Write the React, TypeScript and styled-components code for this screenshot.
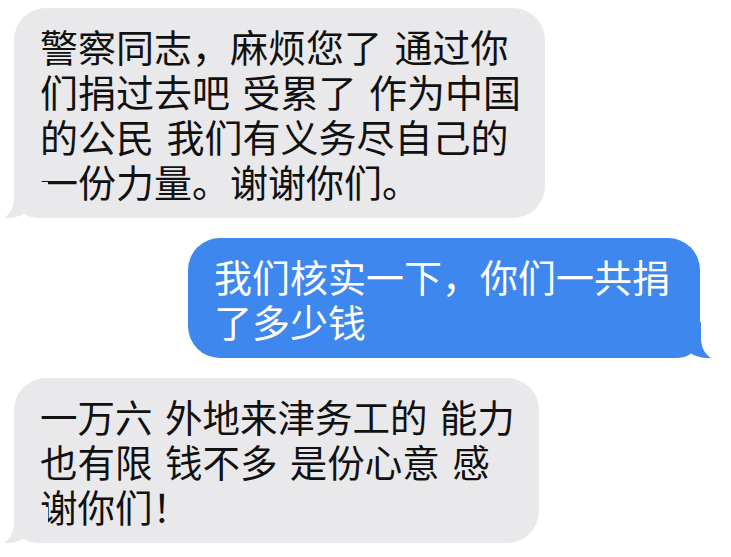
import * as React from 'react';
import styled, { createGlobalStyle } from 'styled-components';

type Side = 'left' | 'right';

interface Message {
  id: number;
  side: Side;
  size: number;
  lines: string[];
}

const messages: Message[] = [
  {
    id: 1,
    side: 'left',
    size: 38,
    lines: ['警察同志，麻烦您了 通过你', '们捐过去吧 受累了 作为中国', '的公民 我们有义务尽自己的', '一份力量。谢谢你们。'],
  },
  {
    id: 2,
    side: 'right',
    size: 38,
    lines: ['我们核实一下，你们一共捐', '了多少钱'],
  },
  {
    id: 3,
    side: 'left',
    size: 37.5,
    lines: ['一万六 外地来津务工的 能力', '也有限 钱不多 是份心意 感', '谢你们！'],
  },
];

const GlobalStyle = createGlobalStyle`
  html, body {
    margin: 0;
    padding: 0;
    background: #ffffff;
  }
  body {
    font-family: "Noto Sans CJK SC", "Noto Sans", sans-serif;
    -webkit-font-smoothing: antialiased;
  }
`;

const Thread = styled.div`
  display: flex;
  flex-direction: column;
  gap: 20px;
  width: 731px;
  height: 557px;
  box-sizing: border-box;
  padding: 8px 31px 0 14px;
  overflow: hidden;
`;

const Row = styled.div<{ $side: Side }>`
  display: flex;
  justify-content: ${(p) => (p.$side === 'left' ? 'flex-start' : 'flex-end')};
`;

const Bubble = styled.div<{ $side: Side; $size: number }>`
  position: relative;
  padding: ${(p) => (p.$side === 'left' ? '15px 24px 15px 26px' : '15px 30px 15px 26px')};
  border-radius: 32px;
  background: ${(p) => (p.$side === 'left' ? '#e9e9eb' : '#3d87ee')};
  color: ${(p) => (p.$side === 'left' ? '#111111' : '#ffffff')};
  font-size: ${(p) => p.$size}px;
  line-height: 45px;
  word-spacing: 4px;
  white-space: pre;
`;

const Line = styled.div`
  display: block;
`;

const Tail = styled.svg<{ $side: Side }>`
  position: absolute;
  bottom: 0;
  width: 44px;
  height: 36px;
  ${(p) => (p.$side === 'left' ? 'left: -10px;' : 'right: -11px; transform: scaleX(-1);')}
`;

const ChatBubble: React.FC<{ message: Message }> = ({ message }) => {
  const fill = message.side === 'left' ? '#e9e9eb' : '#3d87ee';
  return (
    <Row $side={message.side}>
      <Bubble $side={message.side} $size={message.size}>
        <Tail $side={message.side} viewBox="0 0 44 36">
          <path
            d="M10 0 L10 16 C10 26 6 32 0 36 C8 36.5 15 34.5 20 31.5 C24 34.5 29 36 36 36 L44 36 L44 0 Z"
            fill={fill}
          />
        </Tail>
        {message.lines.map((line, i) => (
          <Line key={i}>{line}</Line>
        ))}
      </Bubble>
    </Row>
  );
};

const App: React.FC = () => (
  <>
    <GlobalStyle />
    <Thread>
      {messages.map((m) => (
        <ChatBubble key={m.id} message={m} />
      ))}
    </Thread>
  </>
);

export default App;
